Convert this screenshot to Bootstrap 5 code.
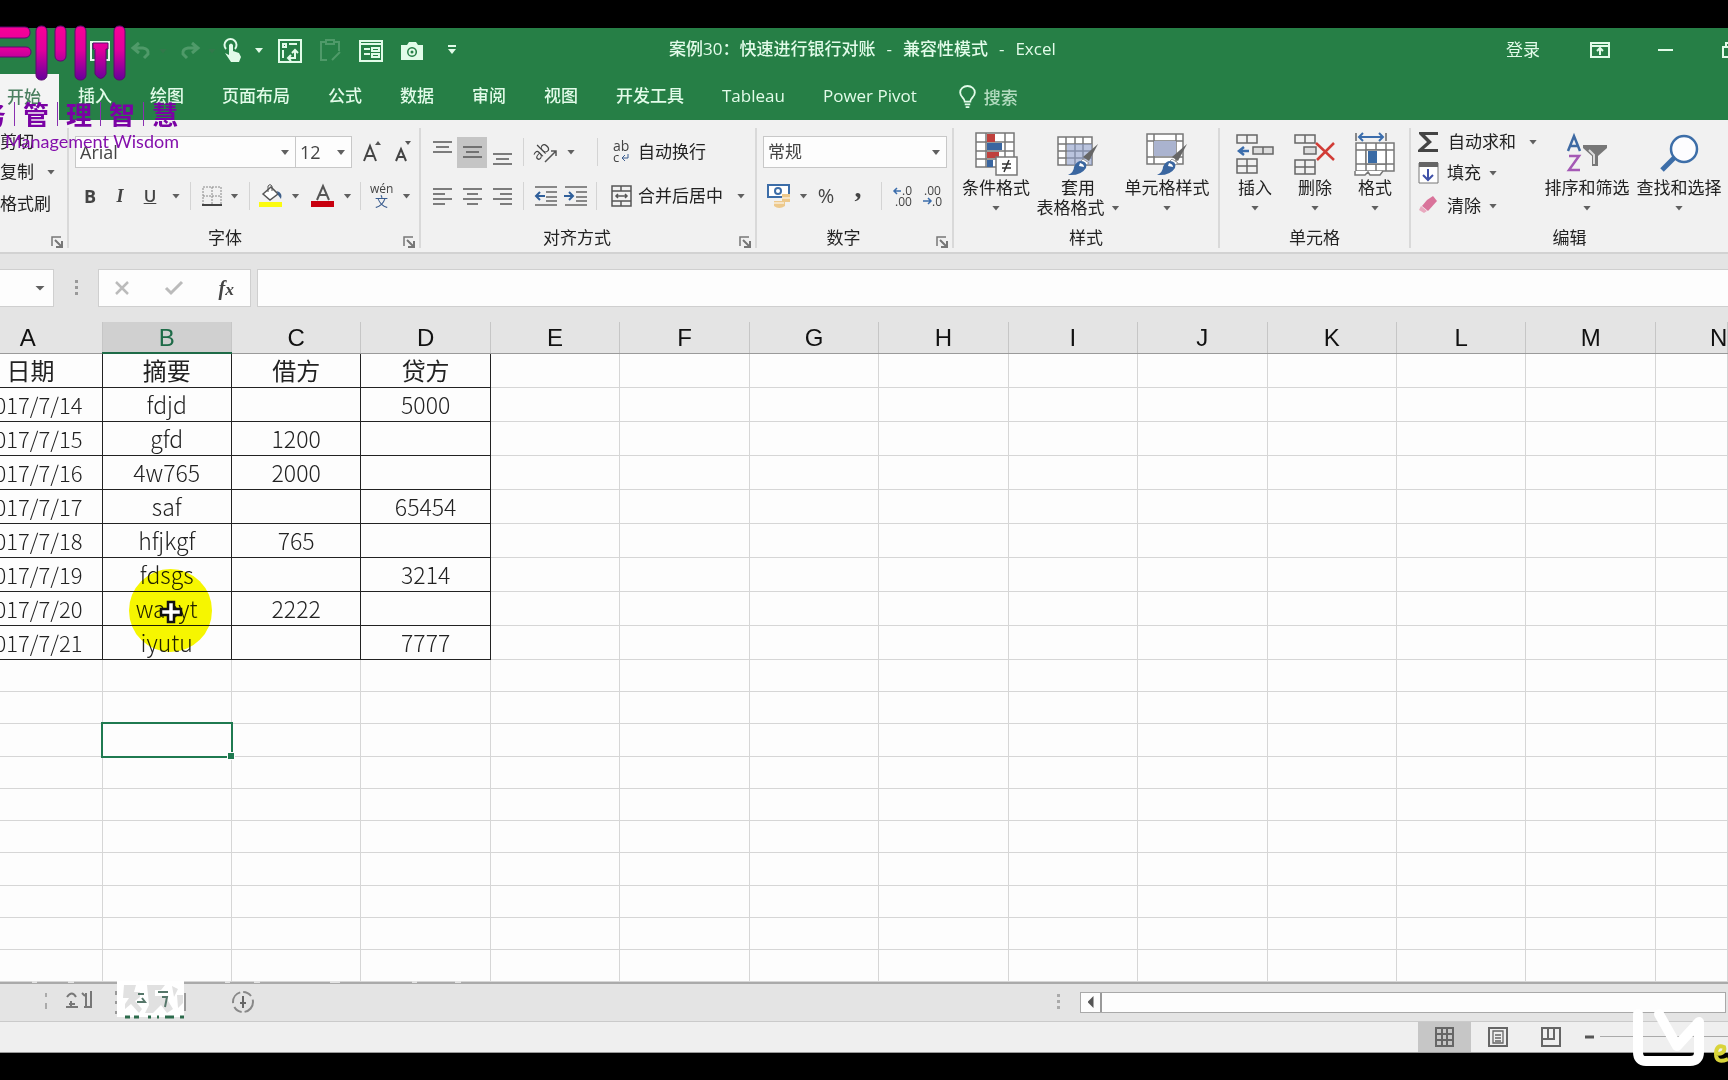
<!DOCTYPE html>
<html lang="zh-CN">
<head>
<meta charset="utf-8">
<meta name="viewport" content="width=device-width, initial-scale=1">
<title>案例30：快速进行银行对账 - Excel</title>
<link href="https://cdn.jsdelivr.net/npm/bootstrap@5.3.0/dist/css/bootstrap.min.css" rel="stylesheet">
<style>
:root{--ink:#444;--green:#267f46;--latin:"Open Sans","Noto Sans CJK SC",sans-serif}
body{background:#000;color:var(--ink);font:17px/20px var(--latin);overflow:hidden}
svg{display:block;flex:none;overflow:visible}
button,input,select{font:inherit;color:inherit}
button{background:none;border:0;padding:0}
.app{padding:28px 0 27px}
.win{background:#e4e4e4;overflow:hidden}
/* title bar */
.topbar{background:var(--green);color:#e2fbe9}
.titlebar{height:46px}
.qat{width:669px;padding-left:90px}
.qat svg{fill:none;stroke:currentColor;stroke-width:2}
.dim{opacity:.22}
.doc-title{gap:11px;padding-bottom:4px;font-weight:500}
.wincontrols{margin-right:-14px;padding-bottom:3px}
.wincontrols svg{fill:none;stroke:currentColor;stroke-width:2}
.tabstrip{height:46px;font-weight:500}
.tabstrip a{color:inherit;text-decoration:none;padding:0 19px;line-height:43px}
.tabstrip a.on{background:#f4f4f4;color:#4b7f60;padding:0 18px 0 7px;line-height:46px}
/* ribbon */
.ribbon{background:#f1f1f1;height:134px;padding-top:8px;border-bottom:2px solid #d2d2d2}
.grp{height:120px;border-right:2px solid #d9d9d9;flex:none}
.grp-body{height:100px;padding-top:7px}
.big-body{padding-top:2px}
.tall-row{height:34px;margin-bottom:10px}
.foot{height:20px;color:#222}
.w-clip{width:69px}.w-font{width:352px}.w-align{width:336px}.w-num{width:197px}.w-style{width:266px}.w-cells{width:191px}
.pl{padding-left:6px}
.ib{width:30px;height:31px;display:flex;align-items:center;justify-content:center;flex:none}
.ib.on{background:#c5c5c5}
.sp{width:52px;height:31px;display:flex;align-items:center;justify-content:center;gap:9px;flex:none}
.wide{width:61px;justify-content:flex-start;padding-left:6px}
.rule{width:1px;height:28px;background:#d4d4d4;margin:0 3px;flex:none}
.rule.far{margin:0 6px}
.caret{width:8px;height:5px;background:#606060;clip-path:polygon(0 0,100% 0,50% 100%);flex:none;display:block}
.lbl{display:flex;align-items:center;gap:6px;height:31px;color:#222}
.box{position:relative;background:#fdfdfd;border:1px solid #c8c8c8;height:32px}
.box select{appearance:none;border:0;background:transparent;width:100%;height:30px;padding:0 4px;outline:0;font-size:18px}
.box .caret{position:absolute;right:6px;top:13px;pointer-events:none}
.big{display:flex;flex-direction:column;align-items:center;color:#222;flex:none;white-space:nowrap}
.big .pic{height:48px;display:flex;align-items:center}
.big .more{height:20px;display:flex;align-items:center;gap:7px}
.b80{width:80px}.b84{width:84px}.b94{width:94px}.b60{width:60px}.b92{width:92px}
.line32{height:32px;display:flex;align-items:center;gap:7px;color:#222}
.bold-glyph{font-weight:700;font-size:18px}
.serif{font-family:"Liberation Serif",serif}
/* formula bar */
.fbar{height:68px;padding-top:15px}
.white{background:#fdfdfd;border:1px solid #cfcfcf;height:38px}
.namebox{width:54px;border-left:0}
.dots{width:44px}
.fx{width:153px}
.fbar input{border:1px solid #cfcfcf;background:#fdfdfd;height:38px;outline:0;margin-left:6px;border-right:0}
/* sheet */
.sheet{table-layout:fixed;width:100%;border-collapse:collapse;background:#fdfdfd;color:#222;text-align:center;font:300 23px/30px "Noto Sans CJK SC",sans-serif}
.sheet .c-a{width:102px}.sheet .c-n{width:72px}
.sheet th{height:31px;background:#e4e4e4;color:#111;font:24px/28px "Liberation Sans",sans-serif;padding:2px 0 0;border-right:1px solid #c6c6c6;border-bottom:1px solid #9a9a9a;overflow:hidden}
.sheet th.on{background:#d0d0d0;color:#1e6b48;border-bottom:2px solid #1e6b48}
.sheet th:first-child{padding-right:46px}
.sheet th:last-child{padding-left:54px}
.sheet td{height:32px;padding:0;border:1px solid #d6d6d6;position:relative;white-space:nowrap}
.sheet .blank:nth-child(4n) td{height:33px}
.sheet .rec td{height:34px}
.sheet .rec td.k{border:1px solid #222;border-bottom-color:#222}
.sheet .rec td:first-child{font-size:22px;padding-right:19px}
.sheet .first td.k{font-size:24px;font-weight:400}
.sheet .rec.first td:first-child{font-size:24px;padding-right:47px}
.sheet tr td:first-child,.sheet .rec td.k:first-child{border-left:0}
.clipl{display:flex;justify-content:flex-end;overflow:hidden}
.sel{position:absolute;inset:-2px;border:2px solid #1f7a50}
.sel::after{content:"";position:absolute;right:-4px;bottom:-4px;width:8px;height:8px;background:#1f7a50;border:1px solid #fdfdfd}
.glow{position:absolute;left:26px;top:-23px;width:83px;height:83px;border-radius:50%;background:#f8f800;mix-blend-mode:multiply;z-index:2}
.cross{position:absolute;left:56px;top:8px;z-index:3}
/* bottom */
.sheettabs{height:40px;border-top:2px solid #aaa;border-bottom:1px solid #cacaca}
.tabpics{width:1060px}
.hscroll{height:21px;border:1px solid #a9a9a9;background:#fdfdfd;margin:0 2px 0 20px}
.hscroll button{width:21px;border-right:2px solid #999}
.tri{width:6px;height:12px;background:#555;clip-path:polygon(100% 0,100% 100%,0 50%)}
.status{height:31px;background:#efefef;border-bottom:1px solid #999}
.vw{width:53px;height:30px;display:flex;align-items:center;justify-content:center}
.vw.on{background:#c6c6c6}
.vw svg{fill:none;stroke:#666;stroke-width:2}
.zoomline{width:128px;height:1px;background:#aaa;margin-left:6px}
/* watermark */
.mark-top{position:absolute;left:0;top:24px;width:180px;pointer-events:none}
.zh{color:#7a02a4;font:700 26px/26px "Noto Sans CJK SC",sans-serif;width:178px;height:26px;margin-top:20px;overflow:hidden}
.zh i{width:1px;height:24px;background:#8a30b0;flex:none}
.zh span{flex:none}
.en{color:#8410ac;font:18px/24px Lato,sans-serif;width:179px;text-align:right;white-space:nowrap;padding-top:2px}
.mark-bot{position:absolute;right:0;top:1000px;overflow:hidden}
</style>
<script src="https://cdn.jsdelivr.net/npm/bootstrap@5.3.0/dist/js/bootstrap.bundle.min.js"></script>
</head>
<body>
<div class="app position-relative">
<div class="win">
<header class="topbar">
  <div class="titlebar d-flex align-items-center">
    <div class="qat d-flex align-items-center flex-shrink-0">
      <svg width="20" height="20"><path d="M1 1h18v18H1zM5 1v7h10V1"/></svg>
      <svg class="dim" width="20" height="18" style="stroke-width:3;margin-left:21px"><path d="M8 1 2 6l6 5M2 6h10q6 1 5 6l-4 4"/></svg>
      <span class="caret dim ms-2"></span>
      <svg class="dim" width="20" height="18" style="stroke-width:3;margin-left:13px"><path d="m12 1 6 5-6 5M18 6H8Q2 7 3 12l4 4"/></svg>
      <span class="caret dim ms-2"></span>
      <svg width="20" height="24" style="margin-left:7px"><path d="M3 10a6 6 0 1 1 9 0"/><path d="M6 6v10l-4-2 6 9h8l2-5-2-4-6-2V6q-2-3-4 0z" fill="currentColor" stroke="none"/></svg>
      <svg width="8" height="8" style="margin-left:12px"><path d="M0 1h8L4 6z" fill="currentColor" stroke="none"/></svg>
      <svg width="24" height="24" style="margin-left:15px"><path d="M1 1h22v22H1zM5 5h3v3H5zM11 5h8M5 11v8M11 19h6V12M14 14l3-3 3 3M13 16l-3 3 3 3"/></svg>
      <svg class="dim" width="22" height="24" style="margin-left:18px"><path d="M7 3H1v18h6M14 3h5v9M6 1h8v4H6zM12 21l8-8"/></svg>
      <svg width="24" height="22" style="margin-left:17px"><path d="M1 1h22v20H1zM1 4h22M5 9h6M5 14h6M13 8h7v3h-7zM13 14h7v3h-7z"/></svg>
      <svg width="24" height="20" style="margin-left:17px"><path fill="currentColor" stroke="none" fill-rule="evenodd" d="M1 4h6l2-3h7l2 3h5v15H1zM12 6a5 5 0 1 0 .1 0z"/><circle cx="12" cy="11" r="2.5"/></svg>
      <svg width="8" height="12" style="margin-left:24px"><path d="M0 1h8"/><path d="M0 4h8L4 9z" fill="currentColor" stroke="none"/></svg>
    </div>
    <div class="doc-title d-flex text-nowrap"><span>案例30：快速进行银行对账</span><span>-</span><span>兼容性模式</span><span>-</span><span>Excel</span></div>
    <div class="wincontrols d-flex align-items-center ms-auto flex-shrink-0">
      <button>登录</button>
      <svg width="20" height="16" style="margin-left:50px"><path d="M1 1h18v14H1zM1 4h18M10 13V7M7 9l3-3 3 3"/></svg>
      <svg width="15" height="4" style="margin-left:48px"><path d="M0 2h15"/></svg>
      <svg width="20" height="16" style="margin-left:49px"><path d="M1 5h12v10H1zM4 5V1h14v11h-5"/></svg>
    </div>
  </div>
  <nav class="tabstrip d-flex text-nowrap">
    <a class="on" href="#">开始</a><a href="#">插入</a><a href="#">绘图</a><a href="#">页面布局</a><a href="#">公式</a><a href="#">数据</a><a href="#">审阅</a><a href="#">视图</a><a href="#">开发工具</a><a href="#">Tableau</a><a href="#">Power Pivot</a>
    <a class="d-flex align-items-center ms-1" href="#"><svg width="17" height="22" viewBox="0 0 18 24" fill="none" stroke="currentColor" stroke-width="2"><path d="M6 17c0-4-5-5-5-10a8 7 0 0 1 16 0c0 5-5 6-5 10zM6 20h6M7 23h4"/></svg><span class="ms-2 opacity-75">搜索</span></a>
  </nav>
</header>

<section class="ribbon d-flex">
  <div class="grp w-clip">
    <div class="grp-body" style="padding-top:0">
      <button class="line32" style="height:28px">剪切</button>
      <button class="line32" style="gap:13px">复制<span class="caret"></span></button>
      <button class="line32">格式刷</button>
    </div>
    <div class="foot d-flex justify-content-end pe-1"><svg class="mt-2" width="12" height="12"><use href="#launch"/></svg></div>
  </div>

  <div class="grp w-font">
    <div class="grp-body pl">
      <div class="tall-row d-flex align-items-center">
        <div class="box" style="width:221px"><select aria-label="字体"><option>Arial</option></select><span class="caret"></span></div>
        <div class="box" style="width:56px;border-left:0"><select aria-label="字号"><option>12</option></select><span class="caret"></span></div>
        <button class="ib" style="margin-left:6px" aria-label="增大字号"><svg width="20" height="22"><path d="m1 20 6-15 6 15M3 15h8" fill="none" stroke="#444" stroke-width="2"/><path d="m12 4 3-4 3 4z" fill="#555"/></svg></button>
        <button class="ib" aria-label="减小字号"><svg width="20" height="22"><path d="m3 20 5-12 5 12M5 16h6" fill="none" stroke="#444" stroke-width="2"/><path d="m12 0h6l-3 4z" fill="#555"/></svg></button>
      </div>
      <div class="tall-row d-flex align-items-center">
        <button class="ib bold-glyph">B</button><button class="ib serif fst-italic bold-glyph">I</button><button class="ib fw-semibold text-decoration-underline">U</button>
        <button class="ib" style="width:22px" aria-label="下划线"><span class="caret"></span></button><span class="rule"></span>
        <button class="sp"><svg width="20" height="20" fill="none" stroke="#888"><path d="M1 1h18v18H1zM10 1v18M1 10h18" stroke-dasharray="2 1"/><path d="M0 19h20" stroke="#444" stroke-width="2"/></svg><span class="caret"></span></button><span class="rule"></span>
        <button class="sp"><svg width="24" height="24"><path d="m4 10 8-7 7 7-8 6z" fill="#fff" stroke="#555" stroke-width="1.5"/><path d="M9 8V2q2-3 4 0v5" fill="none" stroke="#555"/><path d="M18 7q6 2 4 8l-3-4z" fill="#3e5f8a"/><path d="M0 18h23v5H0z" fill="#fbfb10"/></svg><span class="caret"></span></button>
        <button class="sp"><svg width="24" height="24"><path d="m6 16 6-14 6 14M8 11h8" fill="none" stroke="#555" stroke-width="2"/><path d="M0 17h23v6H0z" fill="#c8000f"/></svg><span class="caret"></span></button><span class="rule"></span>
        <button class="sp"><svg width="24" height="26"><text x="0" y="10" font-size="12" fill="#444">wén</text><text x="5" y="23" font-size="13" fill="#3b5d8f">文</text></svg><span class="caret"></span></button>
      </div>
    </div>
    <div class="foot d-flex"><span class="flex-grow-1 text-center" style="padding-right:22px">字体</span><svg class="mt-2 me-1" width="12" height="12"><use href="#launch"/></svg></div>
  </div>

  <div class="grp w-align">
    <div class="grp-body pl">
      <div class="tall-row d-flex align-items-center">
        <button class="ib" aria-label="顶端"><svg width="19" height="26"><path d="M0 3h19M3 8h13M0 13h19" stroke="#555" stroke-width="1.5"/></svg></button>
        <button class="ib on" aria-label="居中"><svg width="19" height="26"><path d="M0 8h19M3 13h13M0 18h19" stroke="#555" stroke-width="1.5"/></svg></button>
        <button class="ib" aria-label="底端"><svg width="19" height="26"><path d="M0 15h19M3 20h13M0 25h19" stroke="#555" stroke-width="1.5"/></svg></button>
        <span class="rule far"></span>
        <button class="sp wide"><svg width="22" height="22"><g transform="rotate(-45 9 9)"><text x="-4" y="12" font-size="16" fill="#444">ab</text></g><path d="m9 21 11-11m0 5v-5h-5" fill="none" stroke="#555" stroke-width="1.5"/></svg><span class="caret"></span></button>
        <span class="rule far"></span>
        <button class="lbl ps-2"><svg width="20" height="24"><text x="1" y="11" font-size="14" fill="#444">ab</text><text x="1" y="22" font-size="13" fill="#444">c</text><path d="M16 14v4h-6m3-3-3 3 3 3" fill="none" stroke="#3b5d8f"/></svg>自动换行</button>
      </div>
      <div class="tall-row d-flex align-items-center">
        <button class="ib" aria-label="左"><svg width="19" height="18"><path d="M0 2h19M0 7h12M0 12h19M0 17h12" stroke="#555" stroke-width="1.5"/></svg></button>
        <button class="ib" aria-label="中"><svg width="19" height="18"><path d="M0 2h19M4 7h11M0 12h19M4 17h11" stroke="#555" stroke-width="1.5"/></svg></button>
        <button class="ib" aria-label="右"><svg width="19" height="18"><path d="M0 2h19M7 7h12M0 12h19M7 17h12" stroke="#555" stroke-width="1.5"/></svg></button>
        <span class="rule far"></span>
        <button class="ib" aria-label="减少缩进"><svg width="23" height="20"><path d="M1 1h22M12 6h11M12 11h11M12 15h11M1 19h22" stroke="#666" stroke-width="1.5"/><path d="M11 10H2m4-4-4 4 4 4" fill="none" stroke="#2f5f9a" stroke-width="2"/></svg></button>
        <button class="ib" aria-label="增加缩进"><svg width="23" height="20"><path d="M1 1h22M12 6h11M12 11h11M12 15h11M1 19h22" stroke="#666" stroke-width="1.5"/><path d="M0 10h9m-4-4 4 4-4 4" fill="none" stroke="#2f5f9a" stroke-width="2"/></svg></button>
        <span class="rule far"></span>
        <button class="lbl ps-2"><svg width="21" height="22" fill="none" stroke="#555" stroke-width="1.5"><path d="M1 1h19v20H1zM1 6h19M1 16h19M10 1v5M10 16v5M5 11h11M7 9l-2 2 2 2M14 9l2 2-2 2"/></svg>合并后居中<span class="caret ms-2"></span></button>
      </div>
    </div>
    <div class="foot d-flex"><span class="flex-grow-1 text-center" style="padding-right:6px">对齐方式</span><svg class="mt-2 me-1" width="12" height="12"><use href="#launch"/></svg></div>
  </div>

  <div class="grp w-num">
    <div class="grp-body pl">
      <div class="tall-row d-flex align-items-center"><div class="box" style="width:184px"><select aria-label="数字格式" style="font-size:17px"><option>常规</option></select><span class="caret"></span></div></div>
      <div class="tall-row d-flex align-items-center">
        <button class="sp" style="width:48px"><svg width="24" height="24"><path d="M1 1h21v12H1z" fill="#fff" stroke="#3c6da8" stroke-width="2"/><circle cx="11" cy="7" r="4" fill="#3c6da8"/><circle cx="11" cy="7" r="2" fill="#fff"/><path d="M15 10h8v8h-5v4q-6 4-11 0v-5h8z" fill="#edc98c"/><path d="M7 19h10M15 14h8" stroke="#fff"/></svg><span class="caret"></span></button>
        <button class="ib" style="font-size:20px">%</button><button class="ib pb-3 serif bold-glyph" style="width:34px;font-size:28px">,</button><span class="rule far"></span>
        <button class="ib" aria-label="增加小数"><svg width="20" height="22" font-size="12" fill="#444"><text x="9" y="10">.0</text><text x="2" y="21">.00</text><path d="M8 6H1m3-3L1 6l3 3" fill="none" stroke="#3b6dac" stroke-width="1.5"/></svg></button>
        <button class="ib" aria-label="减少小数"><svg width="20" height="22" font-size="12" fill="#444"><text x="1" y="10">.00</text><text x="9" y="21">.0</text><path d="M0 16h8m-3-3 3 3-3 3" fill="none" stroke="#3b6dac" stroke-width="1.5"/></svg></button>
      </div>
    </div>
    <div class="foot d-flex"><span class="flex-grow-1 text-center" style="padding-right:6px">数字</span><svg class="mt-2 me-1" width="12" height="12"><use href="#launch"/></svg></div>
  </div>

  <div class="grp w-style">
    <div class="grp-body big-body d-flex" style="padding-left:2px">
      <button class="big b80"><span class="pic"><svg width="44" height="44"><path d="M2 1h38v34H2zM2 10h38M2 19h38M2 27h38M12 1v34M31 1v34" fill="#fff" stroke="#777" stroke-width="1.5"/><path d="M13 2h8v8h-8z" fill="#c0413d"/><path d="M13 11h15v7H13z" fill="#3a66a0"/><path d="M13 20h12v6H13z" fill="#c0413d"/><path d="M13 28h6v7h-6z" fill="#3a66a0"/><path d="M22 25h21v18H22z" fill="#fff" stroke="#777" stroke-width="1.5"/><path d="M28 32h9M28 36h9M35 28l-5 12" stroke="#333" stroke-width="1.5"/></svg></span><span>条件格式</span><span class="more"><span class="caret"></span></span></button>
      <button class="big b84"><span class="pic"><svg width="44" height="44"><path d="M2 5h34v28H2zM2 12h34M2 19h34M2 26h34M10 5v28M19 5v28M27 5v28" fill="#fff" stroke="#777" stroke-width="1.5"/><path d="M11 12h25v21H11z" fill="#8c9cc8" opacity=".6"/><use href="#brush"/></svg></span><span>套用</span><span class="more">表格格式<span class="caret"></span></span></button>
      <button class="big b94"><span class="pic"><svg width="44" height="44"><path d="M2 2h36v30H2zM2 9h36M2 25h36M9 2v30M31 2v30" fill="#fff" stroke="#777" stroke-width="1.5"/><path d="M9 9h22v15H9z" fill="#aab3cf"/><use href="#brush"/></svg></span><span>单元格样式</span><span class="more"><span class="caret"></span></span></button>
    </div>
    <div class="foot text-center">样式</div>
  </div>

  <div class="grp w-cells">
    <div class="grp-body big-body d-flex" style="padding-left:5px">
      <button class="big b60"><span class="pic"><svg width="38" height="42" fill="none" stroke="#666" stroke-width="1.5"><path d="M1 2h20v8H1zM11 2v8M1 26h20v14H1zM11 26v14M1 33h20"/><path d="M17 14h20v7H17zM27 14v7" fill="#ddd"/><path d="M13 18H3m5-4-5 4 5 4" stroke="#3b6dac" stroke-width="2.5"/></svg></span><span>插入</span><span class="more"><span class="caret"></span></span></button>
      <button class="big b60"><span class="pic"><svg width="42" height="42" fill="none" stroke="#666" stroke-width="1.5"><path d="M1 2h20v8H1zM11 2v8M1 27h20v14H1zM11 27v14M1 34h20"/><path d="M10 14h12v7H10z" fill="#ddd"/><path d="m22 10 18 17M40 10 23 27" stroke="#d13c36" stroke-width="2.5"/></svg></span><span>删除</span><span class="more"><span class="caret"></span></span></button>
      <button class="big b60"><span class="pic"><svg width="42" height="46" fill="none" stroke="#777" stroke-width="1.5"><path d="M2 12h38v28H2zM12 12v28M32 12v28M2 19h38M2 33h38M22 12v28" fill="#fff"/><path d="M12 19h20v14H12z" fill="#fff"/><path d="M14 20h9v12h-9z" fill="#3a6ba5" stroke="none"/><path d="M1 40v4h10l3-3 2 3h10l3-4" fill="#fff"/><path d="M2 2v8M32 2v8" stroke="#666"/><path d="M5 6h24M9 2 5 6l4 4M25 2l4 4-4 4" stroke="#3b6dac" stroke-width="2"/></svg></span><span>格式</span><span class="more"><span class="caret"></span></span></button>
    </div>
    <div class="foot text-center">单元格</div>
  </div>

  <div class="flex-grow-1">
    <div class="grp-body d-flex" style="padding:0 0 0 7px">
      <div style="width:123px" class="flex-shrink-0">
        <button class="line32" style="height:28px;gap:9px"><svg width="21" height="22"><path d="M1 1h19v3H7l7 7-8 7h14v3H0v-2l9-8-8-8z" fill="#444"/></svg>自动求和<span class="caret ms-1"></span></button>
        <button class="line32" style="height:34px;gap:8px"><svg width="21" height="22"><path d="M1 1h19v20H1z" fill="#fff" stroke="#777"/><path d="M1 0h19v5H1z" fill="#666"/><path d="M10 7v11m-5-5 5 5 5-5" fill="none" stroke="#3f51a8" stroke-width="2"/></svg>填充<span class="caret"></span></button>
        <button class="line32" style="gap:8px"><svg width="21" height="20"><path d="m9 4 6-4 4 5-9 10-6-5z" fill="#d9739a"/><path d="m3 10 6 5-3 2-5-3z" fill="#e9a9bf"/></svg>清除<span class="caret"></span></button>
      </div>
      <button class="big b92" style="padding-top:2px"><span class="pic"><svg width="42" height="40"><path d="M2 17 8 2l6 15M4 12h8" fill="none" stroke="#3e6aa3" stroke-width="2.5"/><path d="M3 22h10L3 36h11" fill="none" stroke="#a559b5" stroke-width="2.5"/><path d="M17 11h24v3l-9 8v10h-6V22l-9-8z" fill="#777"/><path d="m23 16 5 5v9" stroke="#ddd" fill="none" stroke-width="2"/></svg></span><span>排序和筛选</span><span class="more"><span class="caret"></span></span></button>
      <button class="big b92" style="padding-top:2px"><span class="pic"><svg width="40" height="40"><path d="m3 36 13-13" stroke="#3d6ea8" stroke-width="5"/><circle cx="25" cy="15" r="13" fill="#fdfdff" stroke="#3d6ea8" stroke-width="2.5"/></svg></span><span>查找和选择</span><span class="more"><span class="caret"></span></span></button>
    </div>
    <div class="foot text-center">编辑</div>
  </div>
</section>

<section class="fbar d-flex">
  <div class="white namebox d-flex align-items-center justify-content-end pe-2"><span class="caret" style="width:10px"></span></div>
  <div class="dots d-flex align-items-center justify-content-center" style="height:38px"><svg width="3" height="17" fill="#999"><path d="M0 0h3v3H0zM0 6h3v3H0zM0 12h3v3H0z"/></svg></div>
  <div class="white fx d-flex align-items-center justify-content-between" style="padding:0 16px">
    <button aria-label="取消"><svg width="14" height="14" stroke="#bbb" stroke-width="2.5"><path d="m1 1 12 12M13 1 1 13"/></svg></button>
    <button aria-label="输入"><svg width="18" height="14" fill="none" stroke="#bbb" stroke-width="3"><path d="m1 7 5 5L17 1"/></svg></button>
    <button class="serif fst-italic fw-bold" style="font-size:20px">f<small>x</small></button>
  </div>
  <input class="flex-grow-1" type="text" aria-label="编辑栏">
</section>

<table class="sheet" id="sheet"></table>

<div class="sheettabs d-flex align-items-center">
  <div class="tabpics d-flex flex-shrink-0">
    <svg width="270" height="38" fill="none" stroke="#888" stroke-width="2">
      <path d="M46 10v4M46 20v6" stroke="#aaa"/>
      <path d="M67 14q5-7 9 0M66 24h12M71 18v5M82 10l3 3M86 10v14M91 8v17M69 21h6M84 24h8" stroke="#777"/>
      <path d="M32 -1h5M68 -1h6M225 -1h5M254 -1h6M330 -1h10M412 -1h5M455 -1h6" stroke="#e4e4e4"/>
      <path d="M117 -2h67v36h-67z" fill="#fff" stroke="none"/>
      <path d="M124 2h12l-2 7h6v5l-5 4 7 8-3 4-8-9-6 5v-5l4-6h-6zM147 2h18l-4 5h-6v6h10l8 13-6 4-6-8-8 8h-8l4-8zM172 3l6 3-4 8zM177 12h6v8l-5 5z" fill="#e1e1e1" stroke="none"/>
      <path d="M137 19h8l-3-4M138 11h6M158 9h10M162 14h5l-2 10" stroke="#56776a"/>
      <path d="M125 34h5M134 34h5M148 34h3M157 34h2M165 34h9M180 34h4" stroke="#2c6b4c" stroke-width="3"/>
      <path d="M116 8v4M116 18v3M116 28v3M185 10v18" stroke="#999"/>
      <circle cx="243" cy="19" r="10" stroke-dasharray="14 3 9 4"/><path d="M243 13v12M240 20h6" stroke="#666"/>
    </svg>
    <svg class="ms-auto my-auto" width="3" height="17" fill="#aaa"><path d="M0 0h3v3H0zM0 6h3v3H0zM0 12h3v3H0z"/></svg>
  </div>
  <div class="hscroll d-flex flex-grow-1"><button class="d-flex align-items-center justify-content-center" aria-label="向左滚动"><span class="tri"></span></button></div>
</div>
<footer class="status d-flex align-items-center justify-content-end">
  <button class="vw on" aria-label="普通"><svg width="19" height="20"><path d="M1 1h17v18H1zM1 7h17M1 13h17M7 1v18M12 1v18"/></svg></button>
  <button class="vw" aria-label="页面布局"><svg width="20" height="20"><path d="M1 1h18v18H1z"/><path d="M5 4h10v12H5zM7 8h6M7 11h6M7 14h6" stroke-width="1.3"/></svg></button>
  <button class="vw" aria-label="分页预览"><svg width="20" height="20"><path d="M1 1h18v18H1zM7 1v11M1 12h12V1"/></svg></button>
  <button class="ms-2" aria-label="缩小"><svg width="9" height="4"><path d="M0 2h9" stroke="#555" stroke-width="3"/></svg></button>
  <span class="zoomline"></span>
</footer>
</div>

<div class="mark-top">
  <svg width="130" height="57"><defs><linearGradient id="g" x1="0" y1="0" x2="0" y2="57" gradientUnits="userSpaceOnUse"><stop offset="0" stop-color="#fb0096"/><stop offset=".45" stop-color="#e0009c"/><stop offset="1" stop-color="#62009a"/></linearGradient></defs>
  <g fill="url(#g)" stroke="#5c0a70" stroke-width="1"><rect x="-8" y="3" width="38" height="11" rx="5"/><rect x="-8" y="23" width="39" height="10" rx="5"/><rect x="36" y="2" width="11" height="54" rx="5"/><rect x="55" y="2" width="11" height="35" rx="5"/><rect x="75" y="2" width="11" height="54" rx="5"/><path d="M93 19h15v6h-2v25q-5 9-11 0V25h-2z"/><rect x="114" y="2" width="11" height="54" rx="5"/></g></svg>
  <div class="zh d-flex justify-content-end align-items-center"><span>务</span><i class="mx-2"></i><span>管</span><i class="mx-2"></i><span>理</span><i class="mx-2"></i><span>智</span><i class="mx-2"></i><span>慧</span></div>
  <div class="en">Management Wisdom</div>
</div>
<svg class="mark-bot" width="100" height="72" fill="none"><path d="M44 31v10l-8-9z" fill="#444"/><path d="M10 14v38q0 9 8 9h44q9 0 9-9V22L49 46 31 14" stroke="#fff" stroke-width="10" stroke-linecap="round" stroke-linejoin="round"/><path d="M88 54q10 0 8-7-8-3-8 7t12 5" stroke="#d9d43a" stroke-width="4"/></svg>
</div>

<svg width="0" height="0" class="position-absolute"><defs>
  <g id="launch"><path d="M1 10V1h9" fill="none" stroke="#777" stroke-width="1.5"/><path d="m4 4 6 6M11 5v6H5" fill="none" stroke="#777" stroke-width="2"/></g>
  <g id="brush"><path d="m42 12-9 17-6-4z" fill="#666"/><path d="M27 27l6 4-3 2-5-4z" fill="#fff" stroke="#999"/><path d="M24 29q8 0 6 7-5 8-18 7 6-3 6-8 2-5 6-6z" fill="#3a66a0"/><path d="M24 31q4 1 4 4l-5-1z" fill="#fff"/></g>
</defs></svg>
<script>
const cols = "ABCDEFGHIJKLMN".split("");
const rows = [
  ["日期","摘要","借方","贷方"],
  ["2017/7/14","fdjd","","5000"],
  ["2017/7/15","gfd","1200",""],
  ["2017/7/16","4w765","2000",""],
  ["2017/7/17","saf","","65454"],
  ["2017/7/18","hfjkgf","765",""],
  ["2017/7/19","fdsgs","","3214"],
  ["2017/7/20","waeyt","2222",""],
  ["2017/7/21","iyutu","","7777"]
];
let h = "<colgroup><col class='c-a'>" + "<col>".repeat(12) + "<col class='c-n'></colgroup><thead><tr>";
h += cols.map(c => `<th class="${c === "B" ? "on" : ""}">${c}</th>`).join("") + "</tr></thead><tbody>";
for (let r = 0; r < 19; r++) {
  const d = rows[r];
  h += `<tr class="${d ? "rec" : "blank"}${r ? "" : " first"}">`;
  for (let c = 0; c < 14; c++) {
    let t = d && d[c] || "";
    if (c === 0 && t) t = `<span class="clipl">${t}</span>`;
    if (r === 7 && c === 1) t += '<span class="glow"></span><svg class="cross" width="24" height="24"><path d="M9 2h6v7h7v6h-7v7H9v-7H2V9h7z" fill="#fff" stroke="#111" stroke-width="2.5"/></svg>';
    if (r === 11 && c === 1) t = '<span class="sel"></span>';
    h += `<td class="${d && c < 4 ? "k" : ""}">${t}</td>`;
  }
  h += "</tr>";
}
document.getElementById("sheet").innerHTML = h + "</tbody>";
</script>
</body>
</html>
